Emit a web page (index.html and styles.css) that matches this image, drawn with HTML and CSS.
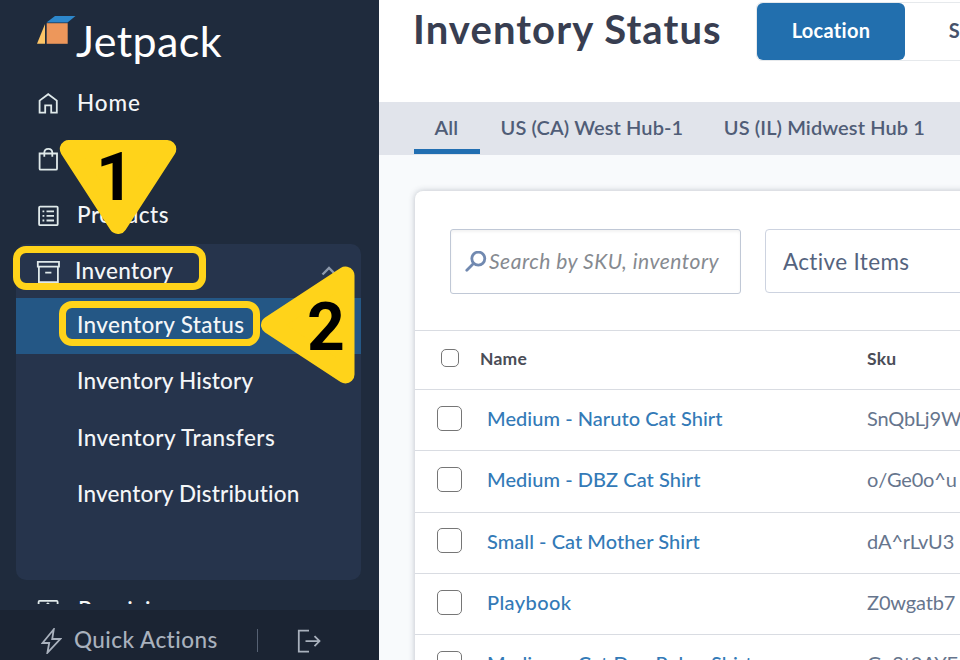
FILE: index.html
```html
<!DOCTYPE html>
<html lang="en">
<head>
    <meta charset="UTF-8">
    <meta name="viewport" content="width=device-width, initial-scale=1.0">
    <title>Inventory Status</title>
    <link rel="stylesheet" href="styles.css">
</head>
<body>
    <div class="sidebar">
        <div class="logo">
            <svg class="logo-mark" width="39" height="28" viewBox="0 0 39 28">
                <path fill="#2d87cb" d="M18 0H38.5L30.5 6.5H9.5Z"/>
                <path fill="#ed975b" d="M9.7 7.2H30.7V27.8H9.7Z"/>
                <path fill="#fdc567" d="M8 8V27.8H0Z"/>
            </svg>
            <span class="logo-text">Jetpack</span>
        </div>
        <div class="nav">
            <div class="nav-item">
                <svg class="icon" width="22" height="22" viewBox="0 0 22 22">
                    <path d="M2.6 20.6V8.6L11.2 2.2L19.8 8.6V20.6H14.2V13.4H8.2V20.6Z"/>
                </svg>
                <span class="home-label">Home</span>
            </div>
            <div class="nav-item">
                <svg class="icon" width="22" height="24" viewBox="0 0 22 24">
                    <path d="M2.6 6.5H20V21.7Q20 22.7 19 22.7H3.6Q2.6 22.7 2.6 21.7Z"/>
                    <path d="M7.3 9.8V5.8Q7.3 1.8 11.3 1.8T15.3 5.8V9.8"/>
                </svg>
            </div>
            <div class="nav-item">
                <svg class="icon" width="23" height="23" viewBox="0 0 23 23">
                    <rect x="2.1" y="2.6" width="18.6" height="18.6" rx="1"/>
                    <path d="M9.5 7.3H17M9.5 11.9H17M9.5 16.5H17M5.5 7.3H7.3M5.5 11.9H7.3M5.5 16.5H7.3"/>
                </svg>
                <span class="products-label">Products</span>
            </div>
            <div class="nav-group">
                <div class="nav-group-header">
                    <svg class="icon" width="24" height="24" viewBox="0 0 24 24">
                        <path d="M1.8 2.8H23V7.6H1.8ZM2.9 7.6V23.2H21.9V7.6M9.2 13.6H15.4"/>
                    </svg>
                    <span>Inventory</span>
                    <svg class="chevron" width="16" height="10" viewBox="0 0 16 10">
                        <path d="M1.5 8.5L8 2L14.5 8.5"/>
                    </svg>
                </div>
                <div class="sub-item active">Inventory Status</div>
                <div class="sub-item history">Inventory History</div>
                <div class="sub-item transfers">Inventory Transfers</div>
                <div class="sub-item distribution">Inventory Distribution</div>
            </div>
            <div class="nav-item receiving">
                <svg class="icon" width="22" height="22" viewBox="0 0 22 22">
                    <rect x="1.6" y="1.9" width="19" height="18" rx="1"/>
                    <path d="M7.5 7.5L10.9 4.5L14.3 7.5"/>
                </svg>
                <span>Receiving</span>
            </div>
        </div>
        <div class="sidebar-footer">
            <svg class="bolt" width="21" height="26" viewBox="0 0 21 26">
                <path d="M12.8 1.2L1.5 15H8.2L6.4 24.8L19.2 11H11.2Z"/>
            </svg>
            <span class="quick-actions">Quick Actions</span>
            <span class="divider"></span>
            <svg class="logout" width="24" height="24" viewBox="0 0 24 24">
                <path d="M12 1.6H1.8V22.6H12M8.5 12.1H22.5M17.5 7.1L22.5 12.1L17.5 17.1"/>
            </svg>
        </div>
    </div>

    <div class="main">
        <div class="page-header">
            <h1>Inventory Status</h1>
            <div class="toggle">
                <button class="toggle-btn selected">Location</button>
                <button class="toggle-btn">SKU</button>
            </div>
        </div>
        <div class="tabs">
            <div class="tab current">All</div>
            <div class="tab">US (CA) West Hub-1</div>
            <div class="tab">US (IL) Midwest Hub 1</div>
        </div>
        <div class="content">
            <div class="card">
                <div class="filters">
                    <div class="search">
                        <svg width="22" height="22" viewBox="0 0 22 22">
                            <circle cx="13.3" cy="7.6" r="6.5"/>
                            <path d="M8.5 12.5L1.8 19.2"/>
                        </svg>
                        <span>Search by SKU, inventory</span>
                    </div>
                    <div class="select">Active Items</div>
                </div>
                <div class="row row-head">
                    <input type="checkbox">
                    <span class="name">Name</span>
                    <span class="sku">Sku</span>
                </div>
                <div class="row">
                    <input type="checkbox">
                    <a class="name">Medium - Naruto Cat Shirt</a>
                    <span class="sku">SnQbLj9W</span>
                </div>
                <div class="row">
                    <input type="checkbox">
                    <a class="name">Medium - DBZ Cat Shirt</a>
                    <span class="sku">o/Ge0o^u</span>
                </div>
                <div class="row">
                    <input type="checkbox">
                    <a class="name">Small - Cat Mother Shirt</a>
                    <span class="sku">dA^rLvU3</span>
                </div>
                <div class="row">
                    <input type="checkbox">
                    <a class="name playbook">Playbook</a>
                    <span class="sku">Z0wgatb7</span>
                </div>
                <div class="row">
                    <input type="checkbox">
                    <a class="name">Medium - Cat Dog Poker Shirt</a>
                    <span class="sku">Gu2t0AYE</span>
                </div>
            </div>
        </div>
    </div>

    <!-- Step markers -->
    <div class="outline outline-1"></div>
    <div class="outline outline-2"></div>
    <div class="step step-1">
        <svg width="118" height="95" viewBox="0 0 118 95">
            <path d="M9.8 9H108.3L59 85Z"/>
        </svg>
        <span>1</span>
    </div>
    <div class="step step-2">
        <svg width="95" height="118" viewBox="0 0 95 118">
            <path d="M85.5 9.5V108.5L10 59Z"/>
        </svg>
        <span>2</span>
    </div>
</body>
</html>
```
FILE: styles.css
```css
* {
    box-sizing: border-box;
}

body {
    margin: 0;
    width: 960px;
    height: 660px;
    display: flex;
    overflow: hidden;
    position: relative;
    font-family: Lato, "Liberation Sans", sans-serif;
    font-variant-ligatures: none;
    background-color: #fff;
}

svg {
    flex: none;
    fill: none;
}

/* Sidebar */
.sidebar {
    width: 379px;
    flex: none;
    display: flex;
    flex-direction: column;
    background-color: #1f2b3d;
    color: #f4f6f8;
    font-size: 22.5px;
    font-weight: 500;
    letter-spacing: 0.35px;
    white-space: nowrap;
}

.logo {
    height: 75px;
    flex: none;
    display: flex;
    align-items: flex-start;
    padding: 16px 0 0 37px;
}

.logo-text {
    font-size: 43px;
    font-weight: 400;
    line-height: 50px;
    letter-spacing: 0.4px;
    color: #fff;
}

.nav {
    height: 529px;
    flex: none;
    overflow: hidden;
}

.nav-item {
    height: 56px;
    display: flex;
    align-items: center;
    gap: 19px;
    padding-left: 37px;
}

.nav-item span {
    padding-bottom: 1px;
}

.nav-item .home-label {
    margin-left: -1px;
    letter-spacing: 0.9px;
}

.nav-item .products-label {
    margin-left: -2px;
    letter-spacing: 0.5px;
}

.icon {
    stroke: #dfe9ea;
    stroke-width: 1.8;
}

.nav-group {
    width: 345px;
    height: 336px;
    margin: 1px 0 0 16px;
    border-radius: 10px;
    background-color: #26344c;
}

.nav-group-header {
    height: 54px;
    display: flex;
    align-items: center;
    padding-left: 20px;
    gap: 15px;
}

.nav-group-header span {
    padding-bottom: 1px;
}

.chevron {
    margin-left: auto;
    margin-right: 24px;
    stroke: #8e9aab;
    stroke-width: 2.4;
}

.sub-item {
    height: 56px;
    line-height: 55px;
    padding-left: 61px;
}

.sub-item.active {
    background-color: #245785;
    line-height: 53px;
}

.sub-item.history,
.sub-item.distribution {
    letter-spacing: 0.18px;
}

.sub-item.history {
    line-height: 54px;
}

.sub-item.transfers {
    letter-spacing: 0.45px;
}

.receiving {
    margin-top: 2px;
}

.sidebar-footer {
    height: 50px;
    margin-top: 6px;
    display: flex;
    align-items: center;
    padding: 11px 0 0 41px;
    background-color: #1b2433;
    color: #a9b1bd;
}

.bolt,
.logout {
    stroke: #a9b1bd;
    stroke-width: 1.8;
}

.quick-actions {
    margin-left: 12px;
    width: 144px;
    padding-bottom: 3px;
    letter-spacing: 0.45px;
}

.divider {
    width: 1px;
    height: 23px;
    margin: 0 39px;
    background-color: #566173;
}

/* Main */
.main {
    flex: 1;
    min-width: 0;
    display: flex;
    flex-direction: column;
    overflow: hidden;
}

.page-header {
    height: 102px;
    flex: none;
    display: flex;
    padding-left: 34px;
}

h1 {
    width: 343px;
    margin: 0;
    flex: none;
    font-size: 40px;
    line-height: 58px;
    font-weight: 700;
    letter-spacing: 1.1px;
    white-space: nowrap;
    color: #383e51;
}

.toggle {
    width: 360px;
    height: 59px;
    flex: none;
    display: flex;
    margin-top: 2px;
    border: 1px solid #e6e9ec;
    border-radius: 6px;
}

.toggle-btn {
    width: 148px;
    padding: 0 0 3px;
    border: none;
    border-radius: 6px;
    background-color: #fff;
    color: #46526b;
    font-family: inherit;
    font-size: 20px;
    font-weight: 700;
    letter-spacing: 0.3px;
}

.toggle-btn.selected {
    background-color: #226fae;
    color: #fff;
}

.toggle-btn:last-child {
    width: 128px;
}

.tabs {
    height: 53px;
    flex: none;
    display: flex;
    padding-left: 35px;
    background-color: #e1e4eb;
}

.tab {
    flex: none;
    padding: 0 20px 0 20.5px;
    line-height: 51px;
    font-size: 20px;
    font-weight: 600;
    letter-spacing: 0.1px;
    color: #505d77;
}

.tab.current {
    width: 66px;
    height: 52px;
    border-bottom: 5px solid #226fb2;
}

.content {
    flex: 1;
    padding: 36px 0 0 36px;
    background-color: #f8fafc;
}

.card {
    width: 700px;
    height: 600px;
    border-radius: 8px;
    background-color: #fff;
    box-shadow: 0 0 6px rgba(50, 60, 80, 0.3);
}

.filters {
    height: 139px;
    display: flex;
    gap: 24px;
    padding: 38px 0 0 35px;
}

.search {
    width: 291px;
    height: 65px;
    display: flex;
    align-items: center;
    gap: 2px;
    padding-left: 14px;
    border: 1px solid #c0c8d6;
    border-radius: 3px;
    box-shadow: inset 0 2px 3px rgba(0, 0, 0, 0.05);
    font-size: 21px;
    font-style: italic;
    letter-spacing: 0.5px;
    white-space: nowrap;
    color: #868a90;
}

.search span {
    padding-bottom: 2px;
}

.search svg {
    stroke: #7189b0;
    stroke-width: 2.8;
    stroke-linecap: round;
}

.select {
    width: 300px;
    height: 64px;
    padding-left: 17px;
    border: 1px solid #cdd3e0;
    border-radius: 4px;
    line-height: 63px;
    font-size: 22.5px;
    letter-spacing: 0.35px;
    color: #55637e;
}

.row {
    height: 61.3px;
    display: grid;
    grid-template-columns: 50px 380px 200px;
    align-items: center;
    padding-left: 22px;
    border-top: 1px solid #d9dce2;
    font-size: 20px;
    white-space: nowrap;
}

.row input {
    appearance: none;
    width: 25px;
    height: 25px;
    margin: 0 0 4px;
    border: 1px solid #767676;
    border-radius: 5px;
    background-color: #fff;
}

.row .name {
    padding-bottom: 4px;
    font-weight: 500;
    letter-spacing: 0.05px;
    color: #337ab7;
}

.row .playbook {
    letter-spacing: 0.4px;
}

.row .sku {
    padding-bottom: 4px;
    letter-spacing: -0.15px;
    color: #66758d;
}

.row.row-head {
    height: 59px;
    grid-template-columns: 39px 387px 200px;
    padding-left: 26px;
    font-size: 17.5px;
}

.row-head input {
    width: 18px;
    height: 18px;
}

.row.row-head .name,
.row.row-head .sku {
    font-weight: 700;
    letter-spacing: 0.2px;
    color: #4a4d57;
}

/* Step markers */
.outline {
    position: absolute;
    border: 7px solid #ffd31a;
    border-radius: 13px;
}

.outline-1 {
    left: 13px;
    top: 246px;
    width: 193px;
    height: 44px;
}

.outline-2 {
    left: 59px;
    top: 301px;
    width: 201px;
    height: 45px;
}

.step {
    position: absolute;
}

.step svg {
    display: block;
    fill: #ffd31a;
    stroke: #ffd31a;
    stroke-width: 18;
    stroke-linejoin: round;
}

.step span {
    position: absolute;
    font-family: Roboto, sans-serif;
    font-size: 66px;
    font-weight: 700;
    line-height: 66px;
    color: #000;
}

.step-1 {
    left: 59px;
    top: 140px;
}

.step-1 span {
    left: 37px;
    top: 5px;
}

.step-2 {
    left: 260px;
    top: 266px;
}

.step-2 span {
    left: 47px;
    top: 29px;
}
```
